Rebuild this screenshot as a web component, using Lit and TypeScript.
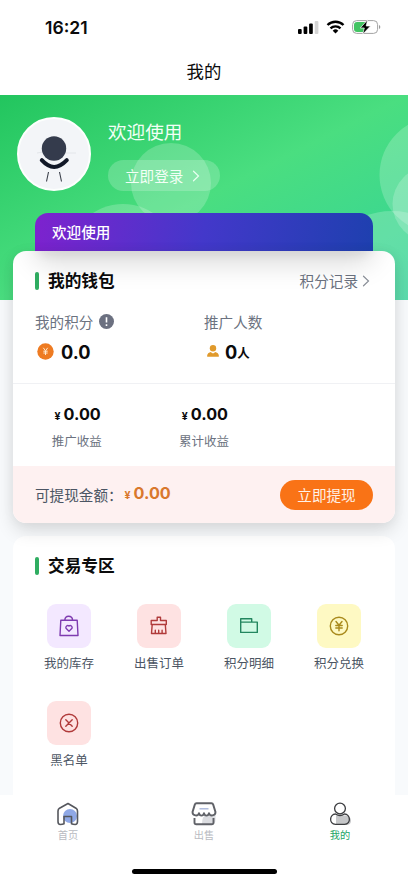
import { LitElement, html, css, svg, nothing } from "lit";
import { customElement, property } from "lit/decorators.js";

const icons: Record<string, unknown> = {
  bag: svg`<path d="M2.800 5.300h16.400l.8 15.200H2zM6.800 5.100C7 2.300 8.600 1.200 10.600 1.200s3.800 1.100 4 3.900"/><path d="M11 16.200l-3-2.900a1.900 1.900 0 0 1 3-2.200 1.900 1.900 0 0 1 3 2.200z"/>`,
  brush: svg`<path d="M9.200 5.500V2.300h3.300v3.200h5.800v4H3.200v-4zM4.200 9.500L3.500 18.500h14.500l-.7-9M7.300 18.300v-3M10.700 18.300v-3M14.100 18.300v-3"/>`,
  folder: svg`<path d="M2.700 3.800h11v3.300h5.600v10.300H2.700zM2.700 7.100h11"/>`,
  yen: svg`<circle cx="11" cy="11" r="8.700"/><path d="M8 6.500l3 3.800 3-3.800M7.800 10.500h6.400M7.800 13h6.400M11 10.500v5.200"/>`,
  close: svg`<circle cx="11" cy="11" r="8.700"/><path d="M7.800 7.800l6.400 6.400M14.200 7.800l-6.400 6.400"/>`,
};

@customElement("service-item")
class ServiceItem extends LitElement {
  @property() icon = "";
  @property() label = "";
  @property({ reflect: true }) tone = "";
  static styles = css`
    :host { display: flex; flex-direction: column; align-items: center; }
    .tile { width: 44px; height: 44px; border-radius: 9px; display: flex; align-items: center; justify-content: center; }
    svg { width: 22px; height: 22px; fill: none; stroke: currentColor; stroke-width: 1.4; stroke-linejoin: round; stroke-linecap: round; }
    .label { margin-top: 6px; font-size: 12.500px; line-height: 18px; color: #4b5563; white-space: nowrap; }
    :host([tone="purple"]) .tile { background: #f3e8ff; color: #7e3bb0; }
    :host([tone="red"]) .tile { background: #fee2e2; color: #b03a3a; }
    :host([tone="green"]) .tile { background: #d1fae5; color: #23865f; }
    :host([tone="yellow"]) .tile { background: #fef9c3; color: #a98a1c; }
  `;
  render() {
    return html`<div class="tile"><svg viewBox="0 0 22 22">${icons[this.icon] ?? nothing}</svg></div>
      <div class="label">${this.label}</div>`;
  }
}

@customElement("app-root")
class AppRoot extends LitElement {
  static styles = css`
    :host { display: flex; flex-direction: column; width: 408px; height: 883px; overflow: hidden; background: #fff; color: #0b0b0c;
      font-family: "Noto Sans CJK SC", sans-serif; }
    * { box-sizing: border-box; }
    svg { display: block; flex: none; }
    .status { height: 54px; padding: 0 27px 0 45px; display: flex; align-items: center; justify-content: space-between; }
    .time { padding-top: 1px; font: 600 17.600px/20px Inter, sans-serif; letter-spacing: 0; }
    .signals { display: flex; align-items: center; gap: 7px; }
    .title { height: 41px; padding-bottom: 7px; display: flex; align-items: center; justify-content: center; font-size: 17.400px; line-height: 24px; }
    .body { position: relative; height: 700px; overflow: hidden; background: #f8fafc; }
    .backdrop { position: absolute; top: 0; left: 0; width: 408px; height: 205px; background: linear-gradient(to bottom right, #22c55e 0%, #4ade80 50%, #34d399 100%); }
    .content { position: relative; display: flex; flex-direction: column; }
    .profile { height: 118px; padding: 22px 17px 0; display: flex; gap: 17px; }
    .avatar { width: 74px; height: 74px; border-radius: 50%; background: #f3f5f8; border: 2px solid #fcfffd; }
    .avatar svg { width: 70px; height: 70px; }
    .who { display: flex; flex-direction: column; align-items: flex-start; color: #f2fff6; }
    .hello { font-size: 18.600px; line-height: 28px; }
    .login { margin-top: 15px; height: 31px; width: 112px; padding: 0 20px 0 17px; border-radius: 16px; background: rgba(255,255,255,.2);
      display: flex; align-items: center; justify-content: space-between; font-size: 14.600px; }
    .banner { height: 38px; margin: 0 35px; padding: 0 17px; border-radius: 13px 13px 0 0; color: #fff; font-size: 14.600px; line-height: 37px;
      font-weight: 500; background: linear-gradient(100deg, #7e22ce, #4338ca 50%, #1e40af); }
    .card { margin: 0 13px; background: #fff; border-radius: 13px; }
    .wallet { position: relative; z-index: 1; height: 272px; box-shadow: 0 8px 18px rgba(0,0,0,.13), 0 0 14px rgba(0,0,0,.04); }
    .head { height: 60px; padding: 0 26px 0 22px; display: flex; align-items: center; }
    .wallet .head { border-radius: 13px 13px 0 0; overflow: hidden; position: relative; }
    .shade { position: absolute; top: -38px; left: 22px; width: 338px; height: 38px; border-radius: 12px; box-shadow: 0 12px 28px rgba(0,0,0,.15), 0 5px 10px rgba(0,0,0,.06); }
    .mark { width: 4px; height: 18px; border-radius: 2px; background: #2fad61; margin-right: 9px; }
    .name { flex: 1; margin-top: -2px; font-size: 16.700px; line-height: 24px; font-weight: 700; }
    .link { display: flex; align-items: center; gap: 4px; margin: -1px -1px 0 0; font-size: 14.600px; color: #6b7280; }
    .pair { height: 73px; padding-left: 22px; display: grid; grid-template-columns: 169px 1fr; border-bottom: 1px solid #f0f1f4; }
    .cap { display: flex; align-items: center; gap: 6px; height: 20px; font-size: 14.600px; color: #6b7280; }
    .val { display: flex; align-items: center; height: 22px; margin-top: 9.500px; font: 700 18.200px/22px Inter, "Noto Sans CJK SC", sans-serif; }
    .val .coin { margin: 0 7px 0 2px; }
    .val .man { margin: -2px 6px 0 3px; }
    .unit { font-size: 12.500px; font-family: "Noto Sans CJK SC", sans-serif; font-weight: 700; padding-top: 2px; }
    .income { height: 82px; padding-top: 18px; display: grid; grid-template-columns: repeat(3, 127.300px); text-align: center; }
    .sum { font: 700 16.200px/24px Inter, sans-serif; }
    .sum small { font-size: 10.500px; margin-right: 3px; }
    .income .sum { padding-left: 2px; }
    .income .sub { font-size: 12.500px; line-height: 18px; margin-top: 3px; color: #6b7280; }
    .cash { height: 57px; padding: 0 22px; border-radius: 0 0 13px 13px; background: #fef1f1; display: flex; align-items: center; font-size: 14.600px; color: #4b5563; }
    .cash .sum { flex: 1; color: #d9782d; padding-left: 2px; }
    .btn { width: 93px; height: 30px; border-radius: 15px; background: #f97316; color: #fff1e6; text-align: center; line-height: 29px; }
    .trade { height: 272px; margin-top: 13px; }
    .trade .head { height: 59px; }
    .grid { padding: 9px 11px 0; display: grid; grid-template-columns: repeat(4, 90px); grid-auto-rows: 97px; }
    .tabs { height: 50px; display: grid; grid-template-columns: repeat(3, 136px); }
    .tab { display: flex; flex-direction: column; align-items: center; padding-top: 5px; font-size: 10.200px; line-height: 14px; color: #b9bbc1; }
    .tab svg { width: 30px; height: 28px; }
    .tab.on { color: #22a565; }
    .bar { width: 145px; height: 5px; border-radius: 3px; background: #000; margin: 24px auto 0; }
  `;

  chevron(color: string) {
    return html`<svg width="8" height="12" viewBox="0 0 8 12" fill="none" stroke=${color} stroke-width="1.2" stroke-linecap="round"><path d="M1.500 1.200L6.500 6l-5 4.800"/></svg>`;
  }

  render() {
    return html`
      <div class="status">
        <div class="time">16:21</div>
        <div class="signals">
          <svg width="21" height="14" viewBox="0 0 21 14"><rect x="0" y="9" width="3.700" height="5" rx="1"/><rect x="5.600" y="6.500" width="3.700" height="7.500" rx="1"/><rect x="11.100" y="3.500" width="3.700" height="10.500" rx="1"/><rect x="16.700" y="1" width="3.700" height="13" rx="1" fill="#d4d4d4"/></svg>
          <svg width="19" height="14" viewBox="0 0 19 14" fill="none" stroke="#000" stroke-width="2.400"><path d="M1.500 5a11.500 11.500 0 0 1 16 0M4.500 8.400a7.200 7.200 0 0 1 10 0"/><path d="M9.500 13.600l-2.800-2.900a4 4 0 0 1 5.600 0z" fill="#000" stroke="none"/></svg>
          <svg width="29" height="16" viewBox="0 0 29 16"><rect x=".6" y="1.600" width="25" height="12.800" rx="4" fill="#fff" stroke="#a3a3a3"/><path d="M5 3h8v10H5a3 3 0 0 1-3-3V6a3 3 0 0 1 3-3z" fill="#43c463"/><path d="M27 6v4q1.300-.5 1.300-2T27 6" fill="#999"/><path d="M15.600.8L8.300 9h4l-1.600 6.200L18.500 7h-4.300z" stroke="#fff" stroke-width=".7"/></svg>
        </div>
      </div>
      <div class="title">我的</div>
      <div class="body">
        <svg class="backdrop" viewBox="0 0 408 205" fill="#fff">
          <circle cx="171" cy="88" r="40" fill-opacity=".2"/>
          <circle cx="123" cy="163" r="54" fill-opacity=".2"/>
          <circle cx="438" cy="80" r="58.500" fill-opacity=".2"/>
          <circle cx="430" cy="109" r="37.500" fill-opacity=".2"/>
          <circle cx="392" cy="191" r="75" fill-opacity=".2"/>
        </svg>
        <div class="content">
          <div class="profile">
            <div class="avatar">
              <svg viewBox="0 0 70 70" fill="none"><path d="M18 34q9-2.500 17-1t22 1" stroke="#e3e6ea"/><circle cx="35" cy="29.500" r="12.200" fill="#343b4c"/><path d="M22.800 41.200q12.200 13.500 25 0" stroke="#111827" stroke-width="4" stroke-linecap="round"/><path d="M29.500 53l-2 9.500M40.500 53l2 9.500" stroke="#3a3f49" stroke-width="1.100"/></svg>
            </div>
            <div class="who">
              <div class="hello">欢迎使用</div>
              <div class="login"><span>立即登录</span>${this.chevron("#e9fff1")}</div>
            </div>
          </div>
          <div class="banner">欢迎使用</div>
          <div class="card wallet">
            <div class="head"><div class="shade"></div><div class="mark"></div><div class="name">我的钱包</div><div class="link">积分记录${this.chevron("#8b9099")}</div></div>
            <div class="pair">
              <div>
                <div class="cap">我的积分
                  <svg width="15" height="15" viewBox="0 0 14 14"><circle cx="7" cy="7" r="7" fill="#6b7080"/><path d="M7 3v5M7 9.500v1.600" stroke="#fff" stroke-width="1.500"/></svg></div>
                <div class="val"><svg class="coin" width="17" height="17" viewBox="0 0 17 17"><circle cx="8.500" cy="8.500" r="8.200" fill="#ee7b22"/><path d="M6.300 4.800l2.200 3 2.200-3M6.300 8.200h4.400M6.300 10h4.400M8.500 8v4" stroke="#ffe9cf" fill="none"/></svg>0.0</div>
              </div>
              <div>
                <div class="cap">推广人数</div>
                <div class="val"><svg class="man" width="12" height="12" viewBox="0 0 12 12" fill="#e09a2c"><circle cx="6" cy="3.200" r="3.200"/><path d="M.2 11.700V10q.3-2.300 3.300-3.100L6 8.600l2.500-1.700q3 .8 3.300 3.100v1.700z"/></svg>0<span class="unit">人</span></div>
              </div>
            </div>
            <div class="income">
              <div><div class="sum"><small>¥</small>0.00</div><div class="sub">推广收益</div></div>
              <div><div class="sum"><small>¥</small>0.00</div><div class="sub">累计收益</div></div>
            </div>
            <div class="cash"><span>可提现金额：</span><div class="sum"><small>¥</small>0.00</div><div class="btn">立即提现</div></div>
          </div>
          <div class="card trade">
            <div class="head"><div class="mark"></div><div class="name">交易专区</div></div>
            <div class="grid">
              <service-item icon="bag" tone="purple" label="我的库存"></service-item>
              <service-item icon="brush" tone="red" label="出售订单"></service-item>
              <service-item icon="folder" tone="green" label="积分明细"></service-item>
              <service-item icon="yen" tone="yellow" label="积分兑换"></service-item>
              <service-item icon="close" tone="red" label="黑名单"></service-item>
            </div>
          </div>
        </div>
      </div>
      <div class="tabs">
        <div class="tab"><svg viewBox="0 0 30 28" fill="none"><circle cx="17" cy="16" r="7" fill="#8fa8e6"/><path d="M15 3.500L6.500 8.200q-1.500 1-1.500 2.800v10.500q0 3 2.300 3t3.700-.7V16.500h7.500v7.300q1.500.7 3.700.7t2.300-3V11q0-1.800-1.500-2.800z" stroke="#55575d" stroke-width="1.600" stroke-linejoin="round"/></svg>首页</div>
        <div class="tab"><svg viewBox="0 0 30 28" fill="none"><path d="M17 15h9.500v5q0 4-4 4H13q0-8 4-9" fill="#dcdde1"/><path d="M7.500 3.300h15q1.300 0 1.700 1.300l2.300 7.500c0 4-5.700 4.500-6.500 1-.8 3.300-4.300 3.300-5 0-.7 3.300-4.300 3.300-5 0-.8 3.500-6.500 3-6.500-1L5.800 4.600q.4-1.300 1.700-1.300z" stroke="#606268" stroke-width="1.900" stroke-linejoin="round"/><path d="M5.500 18v4.500q0 1.800 1.800 1.800h15.400q1.800 0 1.800-1.800V18" stroke="#606268" stroke-width="1.900"/><path d="M10.500 8.800h9" stroke="#a3b2d8" stroke-width="1.300"/></svg>出售</div>
        <div class="tab on"><svg viewBox="0 0 30 28" fill="none"><path d="M11 15.500h10q5 1 5 5t-4 4.500H11z" fill="#c6c7c9"/><circle cx="15" cy="8.500" r="5.400" stroke="#3b3c3f" stroke-width="1.300"/><path d="M10.500 14c-6 0-7 10.300 0 10.300h9c7 0 6-10.300 0-10.300-3 2-6 2-9 0z" stroke="#3b3c3f" stroke-width="1.300" stroke-linejoin="round"/></svg>我的</div>
      </div>
      <div class="bar"></div>
    `;
  }
}
